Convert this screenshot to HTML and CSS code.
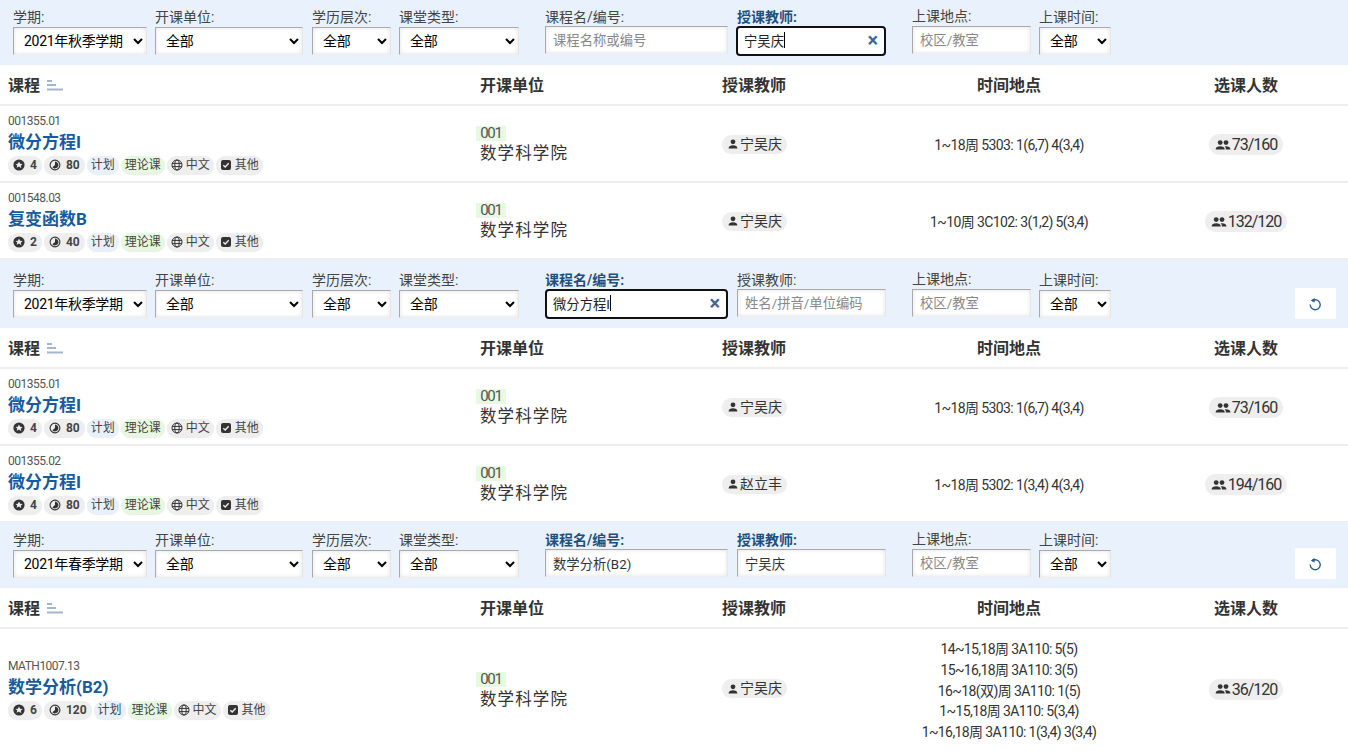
FILE: index.html
```html
<!DOCTYPE html>
<html lang="zh-CN">
<head>
<meta charset="utf-8">
<title>课程查询</title>
<link rel="stylesheet" href="styles.css">
</head>
<body>
<svg class="defs" width="0" height="0" aria-hidden="true">
  <symbol id="i-star" viewBox="0 0 12 12"><circle cx="6" cy="6" r="5.6" fill="currentColor"/><path d="M6 2.4l1.1 2.3 2.5.3-1.8 1.7.5 2.5L6 7.500 3.700 8.700l.5-2.500L2.400 5l2.500-.3z" fill="#eee"/></symbol>
  <symbol id="i-clock" viewBox="0 0 12 12"><circle cx="6" cy="6" r="4.9" fill="none" stroke="currentColor" stroke-width="1.1"/><path d="M6 2.6A3.4 3.4 0 1 1 3.4 8.2L6 6z" fill="currentColor"/></symbol>
  <symbol id="i-globe" viewBox="0 0 12 12"><g fill="none" stroke="currentColor" stroke-width="1"><circle cx="6" cy="6" r="5"/><ellipse cx="6" cy="6" rx="2.2" ry="5"/><path d="M1 4.400h10M1 7.600h10"/></g></symbol>
  <symbol id="i-check" viewBox="0 0 12 12"><rect x="1" y="1" width="10" height="10" rx="2" fill="currentColor"/><path d="M3.300 6.200l1.900 1.800 3.500-3.700" fill="none" stroke="#eee" stroke-width="1.400"/></symbol>
  <symbol id="i-user" viewBox="0 0 12 12"><circle cx="6" cy="3.800" r="2.400" fill="currentColor"/><path d="M1.600 10.400c0-2.200 2-3.200 4.400-3.200s4.400 1 4.400 3.200z" fill="currentColor"/></symbol>
  <symbol id="i-users" viewBox="0 0 16 12"><circle cx="5.200" cy="3.600" r="2.400" fill="currentColor"/><circle cx="11" cy="3.600" r="2.400" fill="currentColor"/><path d="M.6 10.400c0-2.200 2.100-3.200 4.600-3.200s4.600 1 4.600 3.200zM10.900 10.400c0-1.400-.4-2.400-1.300-3.100.5-.1 1-.1 1.500-.1 2.400 0 4.400 1 4.400 3.200z" fill="currentColor"/></symbol>
  <symbol id="i-reset" viewBox="0 0 14 14"><path d="M4 3.900A5 5 0 1 1 2.200 7.600" fill="none" stroke="currentColor" stroke-width="1.300"/><path d="M7.200 .8v4.600L3.400 3.400z" fill="currentColor" transform="translate(-.6 .1)"/></symbol>
</svg>

<form class="filters">
  <label class="field f-term"><span class="lbl">学期:</span><select><option>2021年秋季学期</option></select></label>
  <label class="field f-unit"><span class="lbl">开课单位:</span><select><option>全部</option></select></label>
  <label class="field f-level"><span class="lbl">学历层次:</span><select><option>全部</option></select></label>
  <label class="field f-type"><span class="lbl">课堂类型:</span><select><option>全部</option></select></label>
  <label class="field f-name"><span class="lbl">课程名/编号:</span><input type="text" placeholder="课程名称或编号"></label>
  <label class="field f-teacher"><span class="lbl on">授课教师:</span><span class="focus-box"><input class="focused" type="text" value="宁吴庆"><i class="caret c3"></i><b class="clear">×</b></span></label>
  <label class="field f-place"><span class="lbl up">上课地点:</span><input type="text" placeholder="校区/教室"></label>
  <label class="field f-time"><span class="lbl">上课时间:</span><select><option>全部</option></select></label>
</form>
<div class="thead"><div class="th">课程 <svg class="sort" viewBox="0 0 16 11"><path d="M0 1h5M0 5h9M0 9.500h16" stroke="#a3b6cc" stroke-width="2"/></svg></div><div class="th">开课单位</div><div class="th flush">授课教师</div><div class="th flush mid">时间地点</div><div class="th flush mid">选课人数</div></div>
<div class="row">
  <div class="course"><div class="code">001355.01</div><a class="title">微分方程I</a><div class="tags"><span class="tag strong"><svg class="ic"><use href="#i-star"/></svg> 4</span><span class="tag strong"><svg class="ic"><use href="#i-clock"/></svg> 80</span><span class="tag plan">计划</span><span class="tag theory">理论课</span><span class="tag"><svg class="ic"><use href="#i-globe"/></svg> 中文</span><span class="tag"><svg class="ic"><use href="#i-check"/></svg> 其他</span></div></div>
  <div class="unit"><span class="ucode">001</span><div class="uname">数学科学院</div></div>
  <div class="who"><span class="pill"><svg class="ic-s"><use href="#i-user"/></svg>宁吴庆</span></div>
  <div class="mid time">1~18周 5303: 1(6,7) 4(3,4)</div>
  <div class="mid who"><span class="count"><svg class="ic-u"><use href="#i-users"/></svg>73/160</span></div>
</div>
<div class="row">
  <div class="course"><div class="code">001548.03</div><a class="title">复变函数B</a><div class="tags"><span class="tag strong"><svg class="ic"><use href="#i-star"/></svg> 2</span><span class="tag strong"><svg class="ic"><use href="#i-clock"/></svg> 40</span><span class="tag plan">计划</span><span class="tag theory">理论课</span><span class="tag"><svg class="ic"><use href="#i-globe"/></svg> 中文</span><span class="tag"><svg class="ic"><use href="#i-check"/></svg> 其他</span></div></div>
  <div class="unit"><span class="ucode">001</span><div class="uname">数学科学院</div></div>
  <div class="who"><span class="pill"><svg class="ic-s"><use href="#i-user"/></svg>宁吴庆</span></div>
  <div class="mid time">1~10周 3C102: 3(1,2) 5(3,4)</div>
  <div class="mid who"><span class="count"><svg class="ic-u"><use href="#i-users"/></svg>132/120</span></div>
</div>

<form class="filters tall">
  <label class="field f-term"><span class="lbl">学期:</span><select><option>2021年秋季学期</option></select></label>
  <label class="field f-unit"><span class="lbl">开课单位:</span><select><option>全部</option></select></label>
  <label class="field f-level"><span class="lbl">学历层次:</span><select><option>全部</option></select></label>
  <label class="field f-type"><span class="lbl">课堂类型:</span><select><option>全部</option></select></label>
  <label class="field f-name"><span class="lbl on">课程名/编号:</span><span class="focus-box"><input class="focused" type="text" value="微分方程I"><i class="caret c5"></i><b class="clear">×</b></span></label>
  <label class="field f-teacher"><span class="lbl">授课教师:</span><input type="text" placeholder="姓名/拼音/单位编码"></label>
  <label class="field f-place"><span class="lbl up">上课地点:</span><input type="text" placeholder="校区/教室"></label>
  <label class="field f-time"><span class="lbl">上课时间:</span><select><option>全部</option></select></label>
  <button class="reset" type="button" aria-label="重置"><svg><use href="#i-reset"/></svg></button>
</form>
<div class="thead"><div class="th">课程 <svg class="sort" viewBox="0 0 16 11"><path d="M0 1h5M0 5h9M0 9.500h16" stroke="#a3b6cc" stroke-width="2"/></svg></div><div class="th">开课单位</div><div class="th flush">授课教师</div><div class="th flush mid">时间地点</div><div class="th flush mid">选课人数</div></div>
<div class="row">
  <div class="course"><div class="code">001355.01</div><a class="title">微分方程I</a><div class="tags"><span class="tag strong"><svg class="ic"><use href="#i-star"/></svg> 4</span><span class="tag strong"><svg class="ic"><use href="#i-clock"/></svg> 80</span><span class="tag plan">计划</span><span class="tag theory">理论课</span><span class="tag"><svg class="ic"><use href="#i-globe"/></svg> 中文</span><span class="tag"><svg class="ic"><use href="#i-check"/></svg> 其他</span></div></div>
  <div class="unit"><span class="ucode">001</span><div class="uname">数学科学院</div></div>
  <div class="who"><span class="pill"><svg class="ic-s"><use href="#i-user"/></svg>宁吴庆</span></div>
  <div class="mid time">1~18周 5303: 1(6,7) 4(3,4)</div>
  <div class="mid who"><span class="count"><svg class="ic-u"><use href="#i-users"/></svg>73/160</span></div>
</div>
<div class="row">
  <div class="course"><div class="code">001355.02</div><a class="title">微分方程I</a><div class="tags"><span class="tag strong"><svg class="ic"><use href="#i-star"/></svg> 4</span><span class="tag strong"><svg class="ic"><use href="#i-clock"/></svg> 80</span><span class="tag plan">计划</span><span class="tag theory">理论课</span><span class="tag"><svg class="ic"><use href="#i-globe"/></svg> 中文</span><span class="tag"><svg class="ic"><use href="#i-check"/></svg> 其他</span></div></div>
  <div class="unit"><span class="ucode">001</span><div class="uname">数学科学院</div></div>
  <div class="who"><span class="pill"><svg class="ic-s"><use href="#i-user"/></svg>赵立丰</span></div>
  <div class="mid time">1~18周 5302: 1(3,4) 4(3,4)</div>
  <div class="mid who"><span class="count"><svg class="ic-u"><use href="#i-users"/></svg>194/160</span></div>
</div>

<form class="filters mid-bar">
  <label class="field f-term"><span class="lbl">学期:</span><select><option>2021年春季学期</option></select></label>
  <label class="field f-unit"><span class="lbl">开课单位:</span><select><option>全部</option></select></label>
  <label class="field f-level"><span class="lbl">学历层次:</span><select><option>全部</option></select></label>
  <label class="field f-type"><span class="lbl">课堂类型:</span><select><option>全部</option></select></label>
  <label class="field f-name"><span class="lbl on">课程名/编号:</span><input class="filled" type="text" value="数学分析(B2)"></label>
  <label class="field f-teacher"><span class="lbl on">授课教师:</span><input class="filled" type="text" value="宁吴庆"></label>
  <label class="field f-place"><span class="lbl up">上课地点:</span><input type="text" placeholder="校区/教室"></label>
  <label class="field f-time"><span class="lbl">上课时间:</span><select><option>全部</option></select></label>
  <button class="reset" type="button" aria-label="重置"><svg><use href="#i-reset"/></svg></button>
</form>
<div class="thead"><div class="th">课程 <svg class="sort" viewBox="0 0 16 11"><path d="M0 1h5M0 5h9M0 9.500h16" stroke="#a3b6cc" stroke-width="2"/></svg></div><div class="th">开课单位</div><div class="th flush">授课教师</div><div class="th flush mid">时间地点</div><div class="th flush mid">选课人数</div></div>
<div class="row last">
  <div class="course"><div class="code">MATH1007.13</div><a class="title">数学分析(B2)</a><div class="tags"><span class="tag strong"><svg class="ic"><use href="#i-star"/></svg> 6</span><span class="tag strong"><svg class="ic"><use href="#i-clock"/></svg> 120</span><span class="tag plan">计划</span><span class="tag theory">理论课</span><span class="tag"><svg class="ic"><use href="#i-globe"/></svg> 中文</span><span class="tag"><svg class="ic"><use href="#i-check"/></svg> 其他</span></div></div>
  <div class="unit"><span class="ucode">001</span><div class="uname">数学科学院</div></div>
  <div class="who"><span class="pill"><svg class="ic-s"><use href="#i-user"/></svg>宁吴庆</span></div>
  <div class="mid time"><div>14~15,18周 3A110: 5(5)</div><div>15~16,18周 3A110: 3(5)</div><div>16~18(双)周 3A110: 1(5)</div><div>1~15,18周 3A110: 5(3,4)</div><div>1~16,18周 3A110: 1(3,4) 3(3,4)</div></div>
  <div class="mid who"><span class="count"><svg class="ic-u"><use href="#i-users"/></svg>36/120</span></div>
</div>
</body>
</html>
```
FILE: styles.css
```css
* { box-sizing: border-box; }
html, body { margin: 0; padding: 0; background: #fff; overflow: hidden; }
body { width: 1348px; height: 754px; font-family: Roboto, "Noto Sans CJK SC", sans-serif; font-size: 14px; color: #333; line-height: 21px; }
.defs { position: absolute; }

.filters { position: relative; display: flex; align-items: flex-end; height: 65px; padding: 0 12px 10px 13px; background: #e9f2fc; }
.filters.tall { height: 69px; }
.filters.mid-bar { height: 66px; }
.field { display: flex; flex-direction: column; flex: none; margin-right: 8px; }
.f-term { width: 134px; }
.f-unit { width: 148px; margin-right: 9px; }
.f-level { width: 79px; }
.f-type { width: 120px; margin-right: 26px; }
.f-name { width: 183px; margin-right: 9px; }
.f-teacher { width: 149px; margin-right: 26px; }
.f-place { width: 119px; }
.f-time { width: 72px; }
.lbl { font-size: 14px; line-height: 17px; margin-bottom: 1px; color: #444; white-space: nowrap; }
.lbl.on { font-weight: 700; color: #1f4f7f; }
.lbl.up { margin-bottom: 2px; }
select, input { height: 28px; width: 100%; font-family: inherit; color: #000; background-color: #fff; border: 1px solid; border-color: #aaa #e6e6e6 #eee #aaa; box-shadow: inset 0 0 4px rgba(0,0,0,.12); border-radius: 0; outline: none; }
select { padding: 0 0 0 6px; font-size: 14px; letter-spacing: -.3px; }
input { margin: -1px 0 1px; padding: 0 7px; font-size: 13.33px; }
input::placeholder { color: #888; opacity: 1; }
input.filled { color: #333; }
.focus-box { position: relative; display: block; height: 30px; margin: -1px 0; }
.f-teacher .focus-box { margin-left: -1px; }
input.focused { height: 30px; margin: 0; border: 2px solid #111; border-radius: 4px; box-shadow: none; padding: 0 24px 2px 6px; color: #222; }
.clear { position: absolute; right: 8px; top: 1px; font-size: 20px; line-height: 26px; font-style: normal; font-weight: 700; color: #3d6598; }
.caret { position: absolute; top: 6px; width: 1px; height: 16px; background: #000; }
.caret.c3 { left: 48px; }
.caret.c5 { left: 65px; }
.reset { flex: none; width: 41px; height: 31px; margin: 0 0 -1px auto; padding: 0 2px 0 0; border: 0; background: #fff; color: #235a91; display: flex; align-items: center; justify-content: center; }
.reset svg { width: 14px; height: 14px; }

.thead, .row { display: grid; grid-template-columns: 472px 250px 148px 278px 196px; padding-right: 4px; border-bottom: 2px solid #eee; }
.thead { height: 41px; padding-top: 2px; align-items: center; margin-bottom: -1px; }
.th { padding-left: 8px; font-size: 16px; font-weight: 700; color: #333; white-space: nowrap; }
.th.flush { padding-left: 0; }
.sort { width: 16px; height: 11px; margin-left: 3px; }
.mid { text-align: center; }
.time { padding-top: 4px; font-size: 14px; letter-spacing: -.6px; line-height: 20.75px; }
.who { padding-top: 5px; }
.row { height: 78px; margin-bottom: -1px; align-items: center; }
.row.last { height: 118px; margin-bottom: 0; border-bottom: 0; }
.row.last .time { padding-top: 8px; }
.row.last .who { padding-top: 6px; }
.course { padding: 1px 0 0 8px; }
.row.last .course { margin-top: 2px; }
.code { font-size: 12px; line-height: 16px; margin-bottom: 1px; color: #555; letter-spacing: -.5px; }
.title { display: block; font-size: 17px; line-height: 24px; font-weight: 700; color: #175a9e; }
.tags { display: flex; gap: 2px; margin-top: 2px; }
.tag { display: inline-flex; align-items: center; gap: 3px; height: 18px; padding: 0 4px; font-size: 12px; line-height: 18px; color: #444; background: #eee; border-radius: 9px; box-shadow: 0 1px 1px rgba(0,0,0,.08); white-space: nowrap; }
.tag.strong { font-weight: 700; gap: 5px; padding: 0 5px; }
.tag.plan { background: #e8f1fb; }
.tag.theory { background: #e6f9e0; }
.ic { width: 12px; height: 12px; color: #333; }
.unit { padding: 4px 0 0 8px; }
.row.last .unit { margin-top: 4px; }
.ucode { display: block; width: 30px; margin-left: -4px; margin-bottom: 3px; text-align: center; background: #e8f9e2; font-size: 15px; letter-spacing: -1.2px; line-height: 15px; color: #555; }
.uname { font-size: 16.5px; letter-spacing: 1.1px; line-height: 20px; color: #333; white-space: nowrap; }
.pill, .count { display: inline-flex; align-items: center; background: #eee; border-radius: 10px; white-space: nowrap; }
.pill { height: 19px; padding: 0 5px; }
.count { height: 21px; padding: 0 6px; font-size: 16px; letter-spacing: -1px; }
.ic-s { width: 12px; height: 12px; margin-right: 1px; }
.ic-u { width: 16px; height: 12px; margin-right: 1px; }
```
